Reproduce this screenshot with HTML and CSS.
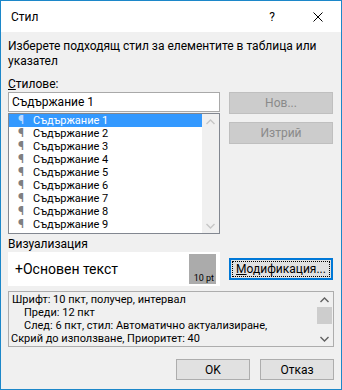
FILE: index.html
```html
<!DOCTYPE html>
<html lang="bg">
<head>
    <meta charset="UTF-8">
    <title>Стил</title>
    <link rel="stylesheet" href="styles.css">
</head>
<body>
    <div class="dialog">
        <div class="titlebar">
            <span class="title">Стил</span>
            <span class="help">?</span>
            <span class="close">
                <svg width="10" height="10" viewBox="0 0 10 10"><path d="M0.5 0.5 L9.5 9.5 M9.5 0.5 L0.5 9.5" stroke="#000" stroke-width="1" fill="none"/></svg>
            </span>
        </div>
        <div class="content">
            <p class="intro">Изберете подходящ стил за елементите в таблица или<br>указател</p>
            <div class="label"><u>С</u>тилове:</div>
            <div class="styles-row">
                <div class="styles-col">
                    <div class="style-input">Съдържание 1</div>
                    <div class="style-list">
                        <ul class="items">
                            <li class="selected"><span class="pil">¶</span>Съдържание 1</li>
                            <li><span class="pil">¶</span>Съдържание 2</li>
                            <li><span class="pil">¶</span>Съдържание 3</li>
                            <li><span class="pil">¶</span>Съдържание 4</li>
                            <li><span class="pil">¶</span>Съдържание 5</li>
                            <li><span class="pil">¶</span>Съдържание 6</li>
                            <li><span class="pil">¶</span>Съдържание 7</li>
                            <li><span class="pil">¶</span>Съдържание 8</li>
                            <li><span class="pil">¶</span>Съдържание 9</li>
                        </ul>
                        <div class="vscroll">
                            <svg width="9" height="6" viewBox="0 0 9 6"><path d="M0.5 5 L4.5 1 L8.5 5" stroke="#c6c6c6" stroke-width="1.4" fill="none"/></svg>
                            <svg width="9" height="6" viewBox="0 0 9 6"><path d="M0.5 1 L4.5 5 L8.5 1" stroke="#c6c6c6" stroke-width="1.4" fill="none"/></svg>
                        </div>
                    </div>
                </div>
                <div class="side-buttons">
                    <button class="btn" disabled>Нов...</button>
                    <button class="btn" disabled>Изтрий</button>
                </div>
            </div>
            <div class="label preview-label">Визуализация</div>
            <div class="preview-row">
                <div class="preview">
                    <div class="preview-inner">
                        <span class="sample">+Основен текст</span>
                        <span class="size">10 pt</span>
                    </div>
                </div>
                <button class="btn modify"><span class="focus"><u>М</u>одификация...</span></button>
            </div>
            <div class="desc">
                <div class="desc-text">
                    <div>Шрифт: 10 пкт, получер, интервал</div>
                    <div class="indent">Преди: 12 пкт</div>
                    <div class="indent">След: 6 пкт, стил: Автоматично актуализиране,</div>
                    <div class="last">Скрий до използване, Приоритет: 40</div>
                </div>
                <div class="vscroll desc-scroll">
                    <svg width="9" height="6" viewBox="0 0 9 6"><path d="M0.5 5 L4.5 1 L8.5 5" stroke="#606060" stroke-width="1.4" fill="none"/></svg>
                    <div class="thumb"></div>
                    <svg class="down" width="9" height="6" viewBox="0 0 9 6"><path d="M0.5 1 L4.5 5 L8.5 1" stroke="#606060" stroke-width="1.4" fill="none"/></svg>
                </div>
            </div>
            <div class="footer">
                <button class="btn">OK</button>
                <button class="btn">Отказ</button>
            </div>
        </div>
    </div>
</body>
</html>
```

FILE: styles.css
```css
body {
    margin: 0;
    font-family: Roboto, "Noto Sans", sans-serif;
    font-size: 12px;
    color: #000;
}
.dialog {
    width: 342px;
    height: 390px;
    box-sizing: border-box;
    border: 1px solid #1c87c9;
    background-color: #f0f0f0;
    display: flex;
    flex-direction: column;
}
.titlebar {
    height: 31px;
    background-color: #fff;
    display: flex;
    align-items: center;
    padding-left: 10px;
}
.title {
    flex: 1;
}
.help {
    width: 46px;
    text-align: center;
}
.close {
    width: 46px;
    display: flex;
    justify-content: center;
}
.content {
    padding: 7px 7px 0 7px;
}
.intro {
    margin: 0;
    line-height: 15px;
}
.label {
    margin-top: 8px;
    line-height: 15px;
}
.styles-row {
    display: flex;
    gap: 9px;
}
.styles-col {
    width: 212px;
}
.style-input {
    height: 20px;
    box-sizing: border-box;
    border: 1px solid #a9a9a9;
    background-color: #fff;
    padding-left: 3px;
    line-height: 18px;
}
.style-list {
    margin-top: 1px;
    height: 121px;
    box-sizing: border-box;
    border: 1px solid #828790;
    background-color: #fff;
    display: flex;
}
.items {
    list-style: none;
    margin: 0;
    padding: 0;
    flex: 1;
    font-size: 11px;
}
.items li {
    height: 13px;
    line-height: 13px;
    padding-left: 9px;
}
.items li.selected {
    background-color: #3399ff;
    color: #fff;
}
.pil {
    display: inline-block;
    width: 15px;
    color: #7f7f7f;
    font-weight: bold;
    font-size: 12px;
}
.selected .pil {
    color: #bcd9ff;
}
.vscroll {
    width: 17px;
    background-color: #f0f0f0;
    display: flex;
    flex-direction: column;
    align-items: center;
    justify-content: space-between;
    padding: 5px 0 4px;
    box-sizing: border-box;
}
.side-buttons {
    width: 104px;
    display: flex;
    flex-direction: column;
    gap: 8px;
}
.btn {
    font-family: inherit;
    font-size: 12px;
    height: 22px;
    box-sizing: border-box;
    border: 1px solid #adadad;
    background-color: #e1e1e1;
    color: #000;
    padding: 0;
}
.btn:disabled {
    background-color: #cccccc;
    border-color: #bfbfbf;
    color: #8a8a8a;
}
.preview-label {
    margin-top: 3px;
}
.preview-row {
    display: flex;
    align-items: center;
    gap: 9px;
}
.preview {
    width: 212px;
    height: 34px;
    box-sizing: border-box;
    background-color: #fff;
    padding: 2px;
}
.preview-inner {
    height: 100%;
    display: flex;
    justify-content: space-between;
    background-color: #fff;
    border-right: 2px solid #fff;
}
.sample {
    font-size: 14px;
    line-height: 30px;
    padding-left: 5px;
}
.size {
    width: 27px;
    background-color: #ababab;
    font-size: 9px;
    display: flex;
    align-items: flex-end;
    justify-content: flex-end;
    padding: 0 2px 1px 0;
    box-sizing: border-box;
}
.modify {
    width: 104px;
    height: 22px;
    border: 2px solid #0078d7;
    padding: 1px;
}
.focus {
    display: block;
    border: 1px dotted #000;
    line-height: 14px;
}
.desc {
    margin-top: 5px;
    height: 56px;
    box-sizing: border-box;
    border: 1px solid #adadad;
    display: flex;
}
.desc-text {
    flex: 1;
    padding: 1px 0 0 3px;
    line-height: 13px;
    font-size: 11px;
}
.desc .indent {
    padding-left: 12px;
}
.desc .last {
    margin-left: -1px;
}
.desc-scroll {
    justify-content: flex-start;
    gap: 3px;
}
.thumb {
    width: 15px;
    height: 17px;
    background-color: #cdcdcd;
    margin-top: 1px;
}
.desc-scroll .down {
    margin-top: auto;
}
.footer {
    display: flex;
    justify-content: flex-end;
    gap: 10px;
    margin-top: 12px;
}
.footer .btn {
    width: 74px;
    height: 21px;
}
```
